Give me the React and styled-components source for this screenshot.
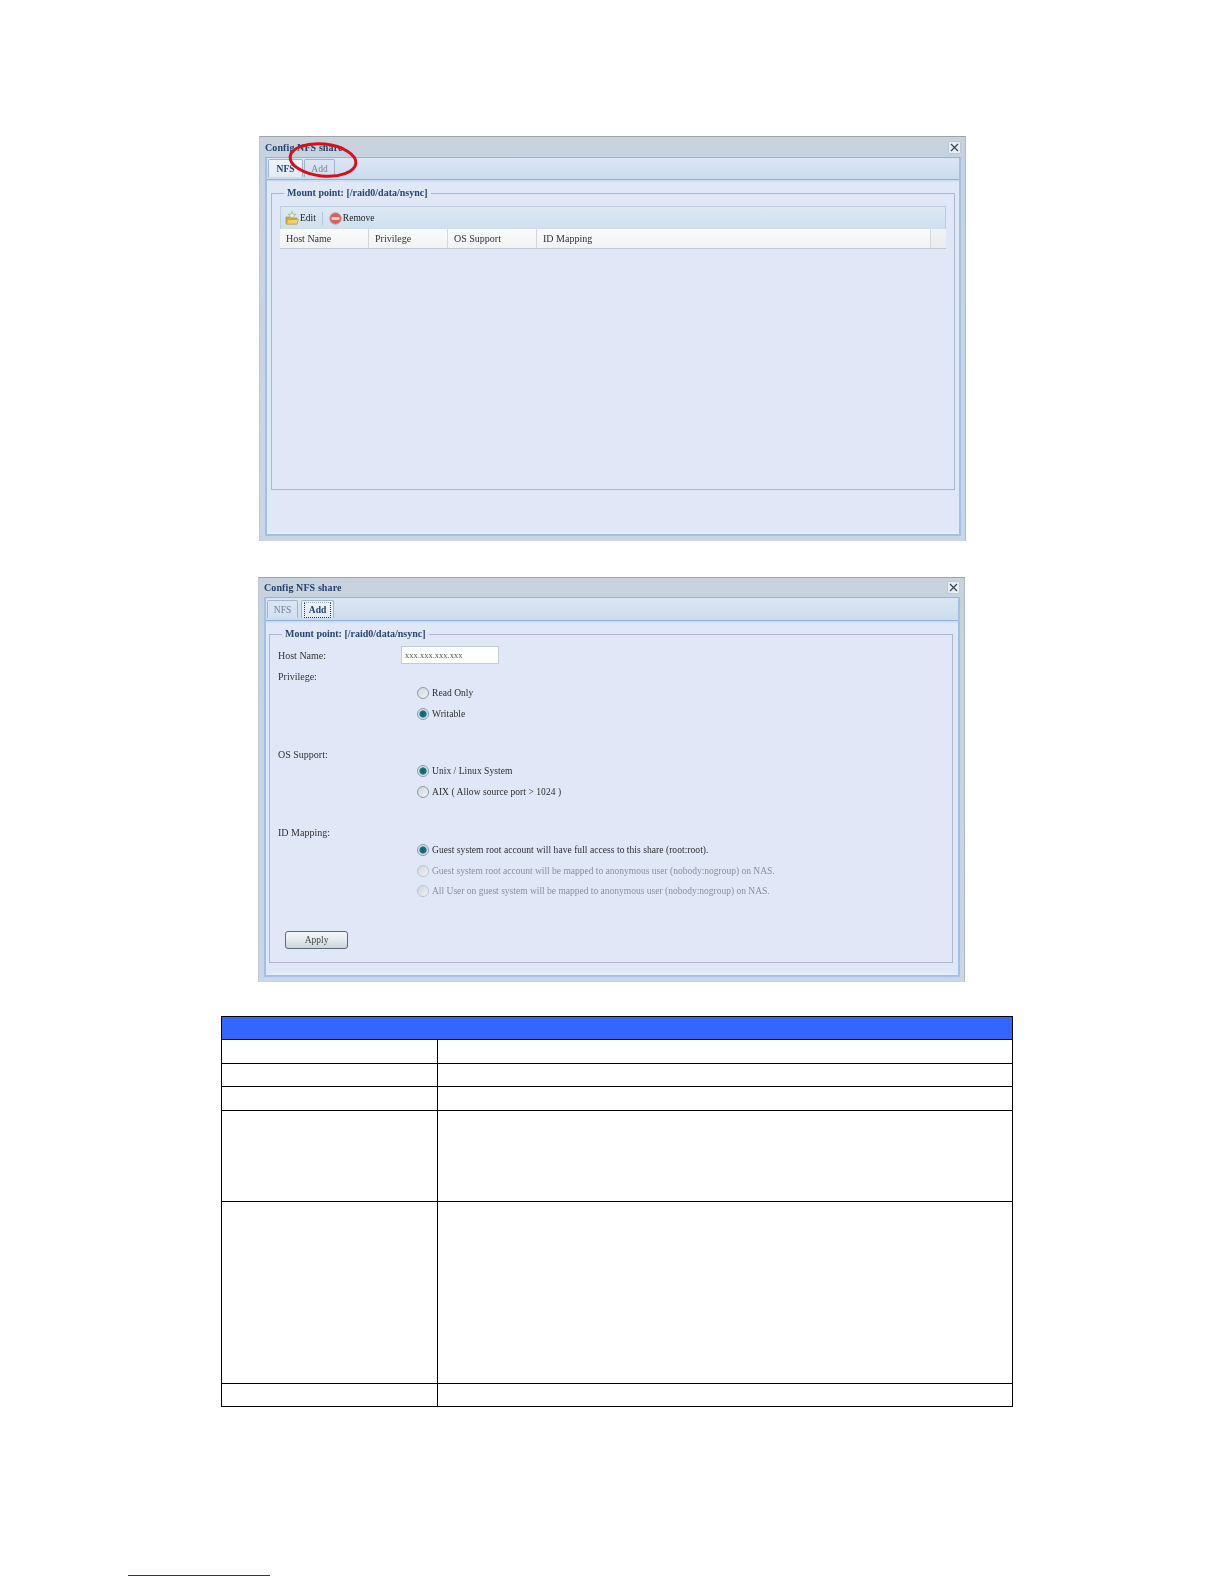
import React from "react";
import styled, { createGlobalStyle } from "styled-components";

const Global = createGlobalStyle`
  html, body { margin: 0; padding: 0; background: #fff; }
  body { font-family: "Liberation Serif", "Times New Roman", serif; }
`;

const Page = styled.div`
  position: relative;
  width: 1224px;
  height: 1584px;
  padding-top: 136px;
  box-sizing: border-box;
  overflow: hidden;
`;

const Win = styled.section`
  position: relative;
  width: 707px;
  height: ${(p) => p.$h}px;
  margin-left: ${(p) => p.$x}px;
  margin-bottom: ${(p) => p.$mb}px;
  box-sizing: border-box;
  display: flex;
  flex-direction: column;
  padding: 0 4px 5px 5px;
  background: linear-gradient(180deg, #c9d3de 0, #c6d2df 21px, #c9d6e6 100%);
  border-top: 1px solid #9ea3a8;
  border-left: 1px solid #c4c9cf;
  border-right: 1px solid #b3bac4;
  filter: blur(0.4px);
`;

const TitleBar = styled.header`
  height: ${(p) => p.$h}px;
  flex: none;
  display: flex;
  align-items: center;
  justify-content: space-between;
  box-sizing: border-box;
`;

const Title = styled.h2`
  margin: 0;
  font-size: 10px;
  font-weight: bold;
  color: #24426f;
  letter-spacing: 0.1px;
`;

const CloseBtn = styled.span`
  width: 11px;
  height: 11px;
  display: flex;
  align-items: center;
  justify-content: center;
  background: #e8eef5;
  border: 1px solid #bcc8d6;
  border-radius: 2px;
`;

const Panel = styled.div`
  flex: 1;
  min-height: 0;
  display: flex;
  flex-direction: column;
  border: 2px solid #a3bfe6;
  border-top: 1px solid #92b3dc;
  background: #e0e7f6;
  box-shadow: inset 2px 0 0 #dcebf8, inset -2px 0 0 #dcebf8, inset 0 -2px 0 #e2eff9;
`;

const TabStrip = styled.div`
  height: ${(p) => p.$h}px;
  flex: none;
  display: flex;
  align-items: flex-end;
  gap: ${(p) => p.$gap}px;
  padding: 0 0 2px 1px;
  box-sizing: border-box;
  background: linear-gradient(180deg, #dbe6f5 0, #ccdced 100%);
  border-bottom: 1px solid #8fb0d8;
  box-shadow: 0 1px 0 #c8dcf6, 0 2px 0 #cfe0f8;
`;

const Tab = styled.div`
  width: ${(p) => p.$w}px;
  height: 18px;
  box-sizing: border-box;
  display: flex;
  align-items: center;
  justify-content: center;
  font-size: 9.5px;
  font-weight: ${(p) => (p.$active ? "bold" : "normal")};
  color: ${(p) => (p.$active ? "#23406f" : "#6f83a0")};
  background: ${(p) => (p.$active ? "linear-gradient(180deg,#eef3fa,#e4ebf7)" : "linear-gradient(180deg,#dbe5f3,#d3e0f0)")};
  border: 1px solid #a2b4cc;
  border-bottom: 0;
  border-radius: 2px 2px 0 0;
`;

const Focus = styled.span`
  border: 1px dotted ${(p) => (p.$on ? "#333" : "transparent")};
  border-top-color: ${(p) => (p.$on ? "#9aa" : "transparent")};
  padding: 2px 4px 1px;
  line-height: 11px;
`;

const Fieldset = styled.fieldset`
  margin: ${(p) => p.$mt}px ${(p) => p.$mr}px 0 ${(p) => p.$ml}px;
  padding: 0;
  height: ${(p) => p.$h}px;
  box-sizing: border-box;
  border: 1px solid #aeb6cb;
  min-width: 0;
`;

const Legend = styled.legend`
  margin-left: 12px;
  padding: 0 3px;
  font-size: 10px;
  font-weight: bold;
  line-height: 12px;
  color: #2a4572;
`;

const GridBox = styled.div`
  margin: 7px 8px 0 8px;
`;

const Toolbar = styled.div`
  height: 23px;
  display: flex;
  align-items: center;
  box-sizing: border-box;
  padding-left: 4px;
  border: 1px solid #bccde2;
  border-bottom: 0;
  background: linear-gradient(180deg, #dde8f4, #cee0ef);
`;

const ToolBtn = styled.div`
  display: flex;
  align-items: center;
  gap: 1px;
  font-size: 9.5px;
  color: #222;
`;

const ToolSep = styled.span`
  width: 1px;
  height: 13px;
  margin: 0 6px 0 6px;
  background: #b5c6da;
`;

const HeadRow = styled.div`
  height: 19px;
  display: grid;
  grid-template-columns: 89px 79px 89px 394px 1fr;
  background: linear-gradient(180deg, #fbfbfb, #f1f2f4);
  border-bottom: 1px solid #c3c8d2;
`;

const HeadCell = styled.div`
  display: flex;
  align-items: center;
  padding-left: 6px;
  font-size: 10px;
  color: #333;
  border-right: 1px solid #d3d6dc;
  &:last-child { border-right: 0; background: linear-gradient(180deg, #f2f3f5, #e9ebef); }
`;

const Form = styled.div`
  padding: 6px 0 0 8px;
  display: flex;
  flex-direction: column;
`;

const Field = styled.div`
  height: ${(p) => p.$h}px;
  margin-top: ${(p) => p.$mt || 0}px;
  display: flex;
  align-items: center;
  font-size: 10px;
  color: #333;
`;

const FieldLabel = styled.span`
  width: 123px;
  flex: none;
`;

const HostInput = styled.div`
  width: 98px;
  height: 18px;
  box-sizing: border-box;
  padding-left: 3px;
  display: flex;
  align-items: center;
  background: #fff;
  border: 1px solid #c6ccd6;
  font-size: 8.5px;
  color: #555;
`;

const Options = styled.div`
  padding-left: 139px;
  display: flex;
  flex-direction: column;
`;

const Option = styled.div`
  height: 20.5px;
  display: flex;
  align-items: center;
  gap: 3px;
  font-size: 9.5px;
  letter-spacing: ${(p) => (p.$muted ? 0 : 0.05)}px;
  color: ${(p) => (p.$muted ? "#8b8f99" : "#2d2d2d")};
`;

const Radio = styled.span`
  width: 10px;
  height: 10px;
  flex: none;
  border-radius: 50%;
  border: 1px solid ${(p) => (p.$muted ? "#c0c4cc" : "#8f98a5")};
  background: ${(p) =>
    p.$on
      ? "radial-gradient(circle, #0c5f6c 0, #1a7580 45%, #dfe6ec 58%, #d3dae3 100%)"
      : "linear-gradient(135deg, #cfd5dd, #f1f4f8)"};
`;

const ApplyBtn = styled.button`
  width: 63px;
  height: 18px;
  margin: 29px 0 0 7px;
  padding: 0;
  font: 9.5px "Liberation Serif", serif;
  color: #444;
  border: 1px solid #5b6a78;
  border-radius: 3px;
  background: linear-gradient(180deg, #f4f6f8 0, #e6e9ed 50%, #cdd3da 100%);
`;

const Circle = styled.svg`
  position: absolute;
  left: 28px;
  top: 5px;
  overflow: visible;
`;

const SpecTable = styled.table`
  width: 792px;
  margin-left: 221px;
  border-collapse: collapse;
  table-layout: fixed;
`;

const HeaderCell = styled.th`
  height: 22px;
  padding: 0;
  background: #3366ff;
  border: 1px solid #000;
`;

const Cell = styled.td`
  height: ${(p) => p.$h}px;
  padding: 0;
  border: 1px solid #000;
  background: #fff;
`;

const FooterLink = styled.a`
  position: absolute;
  left: 128px;
  top: 1575px;
  width: 142px;
  height: 1px;
  background: #1a2fa0;
`;

const rows = [23, 22, 23, 90, 181, 22];

const X = () => (
  <svg width="9" height="9" viewBox="0 0 9 9">
    <path d="M1 1 L8 8 M8 1 L1 8" stroke="#3c4654" strokeWidth="1.3" />
  </svg>
);

const EditIcon = () => (
  <svg width="14" height="14" viewBox="0 0 14 14">
    <path d="M1 6 H5 L6 7 H12 V13 H1 Z" fill="#d9ad3c" stroke="#a08430" strokeWidth="0.6" />
    <path d="M1.5 13 L3 8.5 H13.5 L12 13 Z" fill="#efd069" stroke="#b3973f" strokeWidth="0.5" />
    <path d="M7 0.5 L8 3.2 L10.8 3.4 L8.7 5 L9.4 7.6 L7 6.2 L4.6 7.6 L5.3 5 L3.2 3.4 L6 3.2 Z" fill="#eef0da" stroke="#8fa37a" strokeWidth="0.6" />
  </svg>
);

const RemoveIcon = () => (
  <svg width="13" height="13" viewBox="0 0 13 13">
    <circle cx="6.5" cy="6.5" r="5.8" fill="#dd5f55" stroke="#c9a39c" strokeWidth="0.9" />
    <rect x="2.6" y="5.2" width="7.8" height="2.6" fill="#f6ddd6" />
  </svg>
);

const FirstWindow = () => (
  <Win $x={259} $h={405} $mb={36}>
    <TitleBar $h={20}>
      <Title>Config NFS share</Title>
      <CloseBtn><X /></CloseBtn>
    </TitleBar>
    <Panel>
      <TabStrip $h={22} $gap={1}>
        <Tab $w={35} $active>NFS</Tab>
        <Tab $w={31}>Add</Tab>
      </TabStrip>
      <Fieldset $mt={7} $mr={4} $ml={4} $h={303}>
        <Legend>Mount point: [/raid0/data/nsync]</Legend>
        <GridBox>
          <Toolbar>
            <ToolBtn><EditIcon />Edit</ToolBtn>
            <ToolSep />
            <ToolBtn><RemoveIcon />Remove</ToolBtn>
          </Toolbar>
          <HeadRow>
            <HeadCell>Host Name</HeadCell>
            <HeadCell>Privilege</HeadCell>
            <HeadCell>OS Support</HeadCell>
            <HeadCell>ID Mapping</HeadCell>
            <HeadCell />
          </HeadRow>
        </GridBox>
      </Fieldset>
    </Panel>
    <Circle width="72" height="38" viewBox="0 0 72 38">
      <ellipse cx="35" cy="18" rx="33" ry="16" transform="rotate(6 35 18)" fill="none" stroke="#d8101a" strokeWidth="3" />
    </Circle>
  </Win>
);

const SecondWindow = () => (
  <Win $x={258} $h={405} $mb={34}>
    <TitleBar $h={19}>
      <Title>Config NFS share</Title>
      <CloseBtn><X /></CloseBtn>
    </TitleBar>
    <Panel>
      <TabStrip $h={23} $gap={3}>
        <Tab $w={31}>NFS</Tab>
        <Tab $w={33} $active><Focus $on>Add</Focus></Tab>
      </TabStrip>
      <Fieldset $mt={7} $mr={5} $ml={3} $h={335}>
        <Legend>Mount point: [/raid0/data/nsync]</Legend>
        <Form>
          <Field $h={18}>
            <FieldLabel>Host Name:</FieldLabel>
            <HostInput>xxx.xxx.xxx.xxx</HostInput>
          </Field>
          <Field $h={14} $mt={5}>Privilege:</Field>
          <Options>
            <Option><Radio />Read Only</Option>
            <Option><Radio $on />Writable</Option>
          </Options>
          <Field $h={14} $mt={23}>OS Support:</Field>
          <Options>
            <Option><Radio $on />Unix / Linux System</Option>
            <Option><Radio />AIX ( Allow source port &gt; 1024 )</Option>
          </Options>
          <Field $h={15} $mt={23}>ID Mapping:</Field>
          <Options>
            <Option><Radio $on />Guest system root account will have full access to this share (root:root).</Option>
            <Option $muted><Radio $muted />Guest system root account will be mapped to anonymous user (nobody:nogroup) on NAS.</Option>
            <Option $muted><Radio $muted />All User on guest system will be mapped to anonymous user (nobody:nogroup) on NAS.</Option>
          </Options>
          <ApplyBtn type="button">Apply</ApplyBtn>
        </Form>
      </Fieldset>
    </Panel>
  </Win>
);

export default function App() {
  return (
    <Page>
      <Global />
      <FirstWindow />
      <SecondWindow />
      <SpecTable>
        <colgroup>
          <col style={{ width: 216 }} />
          <col />
        </colgroup>
        <tbody>
          <tr><HeaderCell colSpan={2} /></tr>
          {rows.map((h, i) => (
            <tr key={i}>
              <Cell $h={h} />
              <Cell $h={h} />
            </tr>
          ))}
        </tbody>
      </SpecTable>
      <FooterLink />
    </Page>
  );
}
